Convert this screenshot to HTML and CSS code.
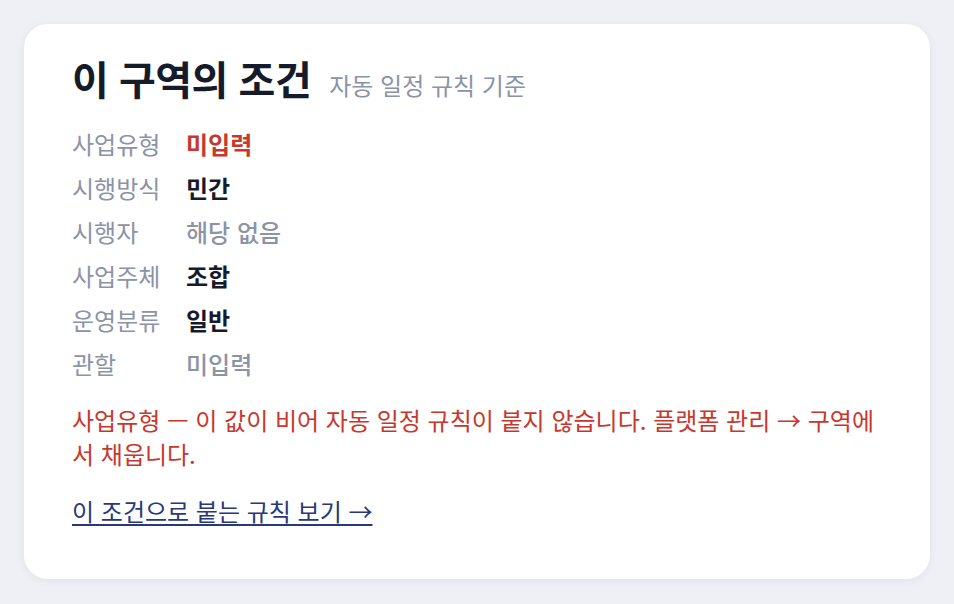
FILE: index.html
```html
<!DOCTYPE html>
<html lang="ko">
<head>
<meta charset="utf-8">
<link rel="stylesheet" href="styles.css">
</head>
<body>
<section class="card">
  <header class="head">
    <h1 class="title">이 구역의 조건</h1>
    <span class="sub">자동 일정 규칙 기준</span>
  </header>
  <dl class="props">
    <dt>사업유형</dt><dd class="v-red">미입력</dd>
    <dt>시행방식</dt><dd class="v-strong">민간</dd>
    <dt>시행자</dt><dd class="v-muted">해당 없음</dd>
    <dt>사업주체</dt><dd class="v-strong">조합</dd>
    <dt>운영분류</dt><dd class="v-strong">일반</dd>
    <dt>관할</dt><dd class="v-muted">미입력</dd>
  </dl>
  <p class="warn">사업유형 — 이 값이 비어 자동 일정 규칙이 붙지 않습니다. 플랫폼 관리 → 구역에서 채웁니다.</p>
  <a class="link" href="#">이 조건으로 붙는 규칙 보기 →</a>
</section>
</body>
</html>
```

FILE: styles.css
```css
* { box-sizing: border-box; }
html, body { margin: 0; }
body {
  background: #eef0f5;
  padding: 24px;
  font-family: "Noto Sans CJK KR", "Noto Sans", sans-serif;
  width: 954px;
  height: 604px;
}
.card {
  background: #ffffff;
  border-radius: 24px;
  box-shadow: 0 2px 10px rgba(30, 40, 70, 0.06);
  padding: 30px 48px 0 48px;
  height: 555px;
  width: 906px;
}
.head {
  display: flex;
  align-items: baseline;
  gap: 18px;
  margin: 0 0 25px 0;
}
.title {
  margin: 0;
  font-size: 40px;
  font-weight: 700;
  color: #151b2b;
  line-height: 48px;
  letter-spacing: -0.5px;
}
.sub {
  font-size: 24px;
  color: #8b93a6;
}
.props {
  display: grid;
  grid-template-columns: 114px 1fr;
  row-gap: 10px;
  margin: 0;
  font-size: 24px;
  line-height: 34px;
}
.props dt { color: #8b93a6; }
.props dd { margin: 0; }
.v-red { color: #c8372d; font-weight: 700; }
.v-strong { color: #151b2b; font-weight: 700; }
.v-muted { color: #8b93a6; font-weight: 500; }
.warn {
  margin: 22px 0 0 0;
  color: #c8372d;
  font-size: 24px;
  line-height: 34px;
}
.link {
  display: inline-block;
  margin-top: 23px;
  color: #283878;
  font-size: 24px;
  line-height: 34px;
  text-decoration: underline;
  text-decoration-thickness: 2px;
  text-underline-offset: 3px;
}
```
